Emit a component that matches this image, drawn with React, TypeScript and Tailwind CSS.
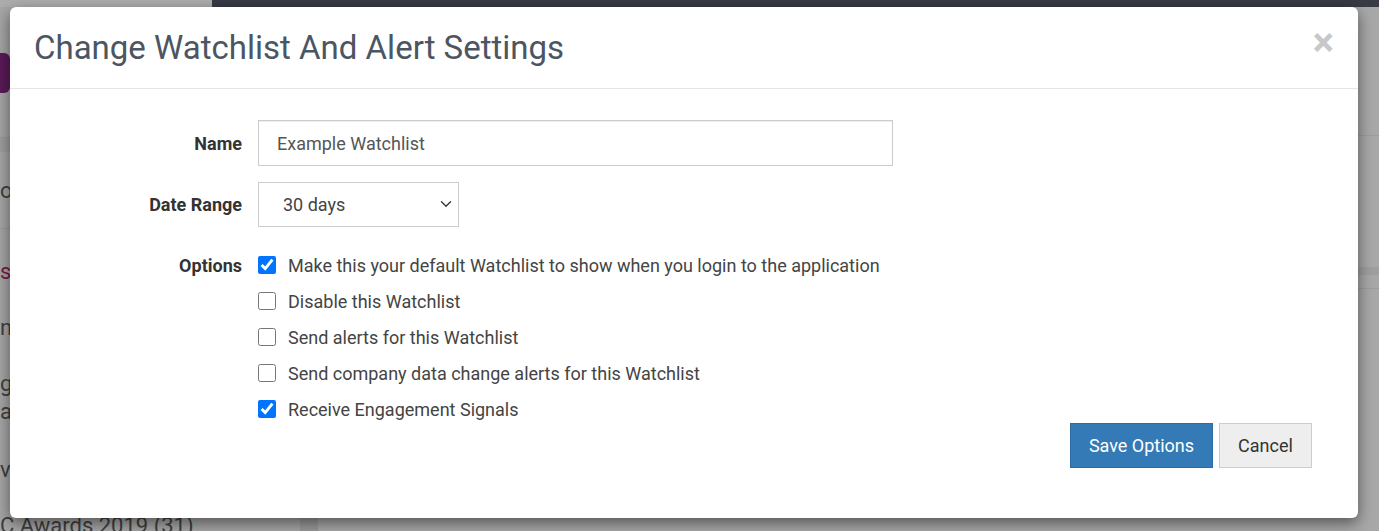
import { ChevronDown } from "lucide-react";

const OPTIONS = [
  { label: "Make this your default Watchlist to show when you login to the application", checked: true },
  { label: "Disable this Watchlist", checked: false },
  { label: "Send alerts for this Watchlist", checked: false },
  { label: "Send company data change alerts for this Watchlist", checked: false },
  { label: "Receive Engagement Signals", checked: true },
];

// The dimmed page that sits behind the modal.
function BackdropPage() {
  return (
    <div className="flex h-full flex-col">
      <div className="flex h-[7px] shrink-0">
        <div className="w-[212px] bg-[#adadad]" />
        <div className="flex-1 bg-[#363b44]" />
      </div>
      <div className="flex flex-1">
        <aside className="flex w-[300px] flex-col bg-[#a6a6a6] text-[22px] leading-[30px] text-[#3f3f3f]">
          <div className="mt-[46px] h-[40px] w-[10px] rounded-r-md bg-[#5a1a57]" />
          <div className="mt-[44px] h-[15px] border-t border-[#9c9c9c] bg-[#9e9e9e]" />
          <div className="mt-[24px]">ou</div>
          <div className="mt-[22px] border-t border-[#999]" />
          <div className="mt-[28px] text-[#7a1b45]">s</div>
          <div className="mt-[26px]">n</div>
          <div className="mt-[26px]">g</div>
          <div className="-mt-[2px]">a</div>
          <div className="mt-[28px]">ve</div>
          <div className="mt-auto -mb-[3px] leading-[16px]">C Awards 2019 (31)</div>
        </aside>
        <div className="w-[18px] bg-[#9a9a9a]" />
        <main className="flex flex-1 flex-col bg-[#a8a8a8]">
          <div className="mt-[128px] border-t border-[#9d9d9d]" />
          <div className="mt-[131px] h-[8px] bg-[#9f9f9f]" />
          <div className="mt-[13px] border-t border-[#9d9d9d]" />
        </main>
      </div>
    </div>
  );
}

function Checkbox({ checked }: { checked: boolean }) {
  return (
    <input
      type="checkbox"
      defaultChecked={checked}
      className="m-0 h-[18px] w-[18px] shrink-0"
    />
  );
}

export default function App() {
  return (
    <div className="relative h-[531px] w-[1379px] overflow-hidden font-['Roboto',sans-serif]">
      <BackdropPage />

      <div className="absolute left-[10px] top-[7px] flex h-[511px] w-[1348px] flex-col rounded-[6px] bg-white shadow-[0_5px_15px_rgba(0,0,0,0.5)]">
        <header className="flex h-[82px] shrink-0 items-center justify-between border-b border-[#e5e5e5] pl-[24px] pr-[24px]">
          <h1 className="text-[33px] leading-none text-[#4b5662]">Change Watchlist And Alert Settings</h1>
          <button className="-mt-[10px] text-[40px] font-bold leading-none text-[#c8c8c8]">×</button>
        </header>

        <div className="flex flex-1 flex-col pt-[31px] pr-[46px]">
          <div className="grid grid-cols-[232px_1fr] gap-x-[16px] text-[18px]">
            <label className="flex h-[46px] items-center justify-end font-bold text-[#333]">Name</label>
            <input
              defaultValue="Example Watchlist"
              className="h-[46px] w-[635px] border border-[#ccc] px-[18px] text-[18px] text-[#555] shadow-[inset_0_1px_1px_rgba(0,0,0,0.075)] outline-none"
            />

            <label className="mt-[16px] flex h-[45px] items-center justify-end font-bold text-[#333]">Date Range</label>
            <div className="relative mt-[16px] h-[45px] w-[201px]">
              <select className="h-full w-full appearance-none border border-[#ccc] bg-white pl-[24px] text-[18px] text-[#444] outline-none">
                <option>30 days</option>
              </select>
              <ChevronDown className="pointer-events-none absolute right-[4px] top-[13px] h-[18px] w-[18px] text-[#333]" strokeWidth={1.75} />
            </div>

            <label className="mt-[20px] flex h-[36px] items-center justify-end font-bold text-[#333]">Options</label>
            <div className="mt-[20px] flex flex-col">
              {OPTIONS.map((o) => (
                <label key={o.label} className="flex h-[36px] items-center gap-[12px] text-[#444]">
                  <Checkbox checked={o.checked} />
                  {o.label}
                </label>
              ))}
            </div>
          </div>

          <div className="-mt-[4px] flex justify-end gap-[6px]">
            <button className="h-[45px] w-[143px] border border-[#2e6da4] bg-[#337ab7] text-[18px] text-white">
              Save Options
            </button>
            <button className="h-[45px] w-[93px] border border-[#ccc] bg-[#eee] text-[18px] text-[#333]">
              Cancel
            </button>
          </div>
        </div>
      </div>
    </div>
  );
}
